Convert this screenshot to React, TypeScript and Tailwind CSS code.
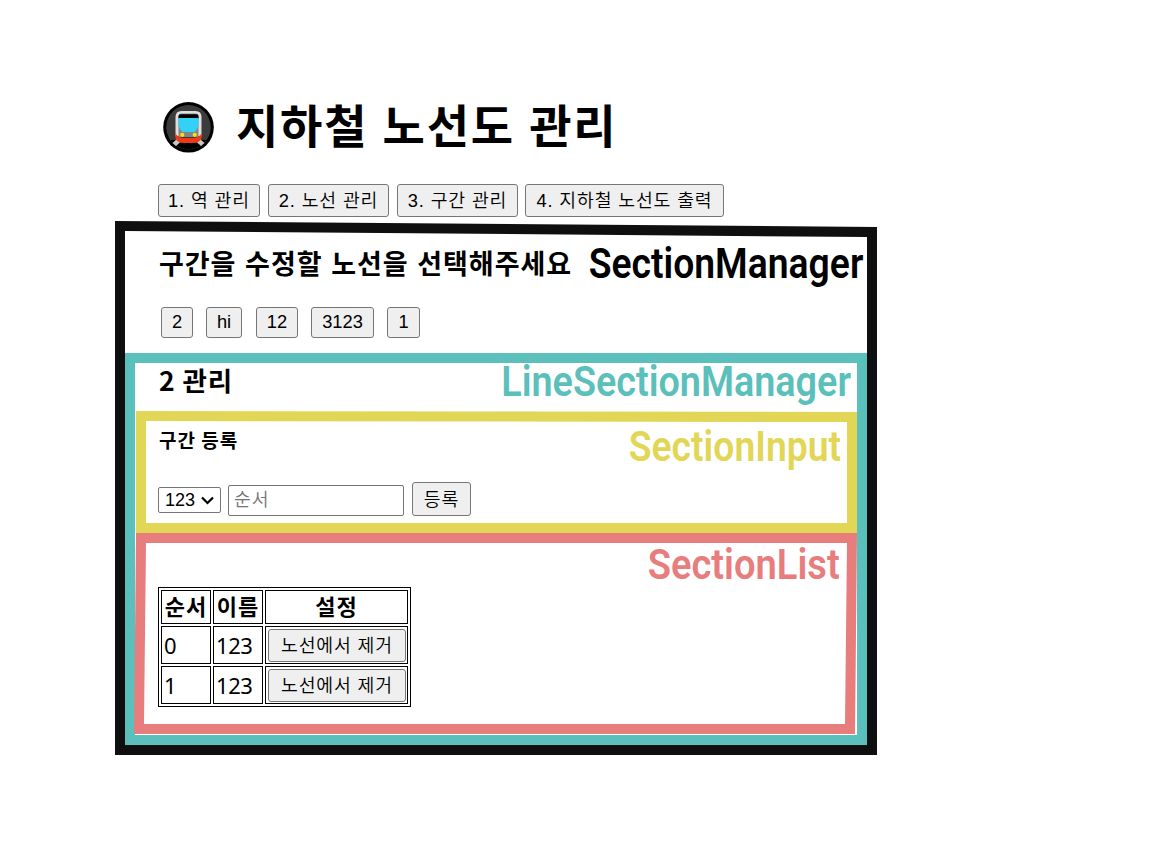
import type { ReactNode } from 'react';

const KR = "font-['Noto_Sans_CJK_KR',sans-serif]";

function TrainIcon() {
  return (
    <svg className="mt-px h-[51px] w-[51px] shrink-0" viewBox="0 0 51 51" aria-hidden="true">
      <circle cx="25.500" cy="25.300" r="25.300" fill="#000" />
      <circle cx="25.500" cy="25.300" r="22.200" fill="#3b3b3b" />
      <path d="M7.500 38h36a22.200 22.200 0 0 1-36 0Z" fill="#000" />
      <path d="m14.500 36.500-5 4.500 3.500 3 5.500-5ZM36.500 36.500l5 4.500-3.500 3-5.500-5Z" fill="#c8c8c8" />
      <path d="M12.500 34V15q0-6 6-6h14q6 0 6 6v19Z" fill="#dedede" />
      <path d="M15.500 32V14.500q0-3 3-3h14q3 0 3 3V35h-20Z" fill="#858585" />
      <path d="M15.500 16.500h20v-2.300q0-2-2-2h-16q-2 0-2 2Z" fill="#000" />
      <path d="M15.500 16h20v4q0 7-4 10h-12q-4-3-4-10Z" fill="#32d2f8" />
      <path d="M12.300 31.500q2.200 3.500 6.700 4.500h13q4.500-1 6.700-4.500V35q-1 6-9.200 6h-8q-8.200 0-9.200-6Z" fill="#f03a17" />
      <circle cx="19.300" cy="32.800" r="2.100" fill="#ffe000" />
      <circle cx="31.700" cy="32.800" r="2.100" fill="#ffe000" />
    </svg>
  );
}

function Button({ children, className }: { children: ReactNode; className: string }) {
  return (
    <button
      type="button"
      className={`flex shrink-0 items-center justify-center whitespace-nowrap rounded-[3px] border border-[#767676] bg-[#efefef] text-[18.3px] leading-none text-black ${className}`}
    >
      {children}
    </button>
  );
}

const krButton =
  "h-[33px] pt-[2px] font-['Liberation_Sans','Noto_Sans_CJK_KR',sans-serif] font-[350] tracking-[0.85px]";

function Label({ children, className }: { children: string; className: string }) {
  return (
    <span
      className={`block shrink-0 origin-right whitespace-nowrap font-[Roboto] text-[42px] font-semibold leading-[38px] ${className}`}
    >
      {children}
    </span>
  );
}

const lines = [
  { name: '2', box: 'w-8' },
  { name: 'hi', box: 'ml-[13px] w-9' },
  { name: '12', box: 'ml-[14px] w-[42px]' },
  { name: '3123', box: 'ml-[13px] w-[63px]' },
  { name: '1', box: 'ml-[13px] w-[33px]' },
];

function SectionInput() {
  return (
    <section className="ml-px h-[122px] w-[721px] bg-[#e1d655] p-[10px] [clip-path:polygon(0_0,100%_1px,100%_100%,0_100%)]">
      <div className="h-[102px] w-[701px] bg-white pl-3 [clip-path:polygon(0_0,100%_1px,100%_100%,0_100%)]">
        <div className="flex h-[60px] justify-between pr-[6px] pt-[7px]">
          <h4 className={`${KR} -mt-px pl-px text-[19px] font-bold leading-[26px] tracking-[1px]`}>구간 등록</h4>
          <Label className="scale-x-[0.888] text-[#e1d655]">SectionInput</Label>
        </div>
        <form className="flex items-start">
          <div className="relative mt-[6px]">
            <select
              defaultValue="123"
              className="block h-[26px] w-[63px] appearance-none rounded-[2px] border border-[#767676] bg-white pl-[6px] font-['Liberation_Sans'] text-[18px] leading-none text-black"
            >
              <option value="123">123</option>
            </select>
            <svg className="pointer-events-none absolute right-[6px] top-[9px] h-[9px] w-[14px]" viewBox="0 0 14 9" fill="none" stroke="#000" strokeWidth="2.200">
              <path d="m1 1.500 5.500 5.500L12 1.500" />
            </svg>
          </div>
          <input
            placeholder="순서"
            className={`${KR} ml-[7px] mt-1 h-[31px] w-[176px] rounded-[2px] border border-[#767676] pb-[5px] pl-[5px] text-[18.3px] font-[350] tracking-[1px] placeholder:text-[#757575]`}
          />
          <Button className={`${krButton} ml-2 mt-px h-[34px] w-[59px]`}>등록</Button>
        </form>
      </div>
    </section>
  );
}

function SectionList() {
  const head = `${KR} border border-black p-0 pb-[4px] text-[22px] font-bold leading-none tracking-[1px]`;
  const cell = "border border-black p-0 pl-[2px] font-['Noto_Sans'] text-[22px] leading-none tracking-[-0.4px]";
  return (
    <section className="-ml-px h-[201px] w-[723px] bg-[#e87d7d] px-3 py-[10px] [clip-path:polygon(2px_0,100%_0,calc(100%-2px)_100%,0_100%)]">
      <div className="-ml-[2px] h-[181px] w-[703px] bg-white pl-[14px] [clip-path:polygon(2px_0,100%_0,calc(100%-2px)_100%,0_100%)]">
        <div className="flex h-[44px] justify-end pr-[7px] pt-[3px]">
          <Label className="scale-x-[0.907] text-[#e87d7d]">SectionList</Label>
        </div>
        <table className="h-[120px] w-[253px] table-fixed border-separate border-spacing-[2px] border border-black">
          <colgroup>
            <col className="w-[50px]" />
            <col className="w-[50px]" />
            <col className="w-[143px]" />
          </colgroup>
          <thead>
            <tr className="h-[34px]">
              <th className={head}>순서</th>
              <th className={head}>이름</th>
              <th className={head}>설정</th>
            </tr>
          </thead>
          <tbody>
            {['0', '1'].map((order) => (
              <tr key={order} className="h-[38px]">
                <td className={cell}>{order}</td>
                <td className={cell}>123</td>
                <td className="border border-black p-0 pl-[2px]">
                  <Button className={`${krButton} w-[138px]`}>노선에서 제거</Button>
                </td>
              </tr>
            ))}
          </tbody>
        </table>
      </div>
    </section>
  );
}

function LineSectionManager() {
  return (
    <section className="h-[392px] w-[742px] bg-[#5bbfbb] p-[10px]">
      <div className="h-[372px] w-[722px] bg-white">
        <div className="flex h-[48px] justify-between pl-6 pr-[6px]">
          <h3 className={`${KR} text-[26.5px] font-bold leading-[34px] tracking-[0.9px]`}>2 관리</h3>
          <Label className="scale-x-[0.899] text-[#5bbfbb]">LineSectionManager</Label>
        </div>
        <SectionInput />
        <SectionList />
      </div>
    </section>
  );
}

function SectionManager() {
  return (
    <section className="h-[534px] w-[762px] bg-[#0f0f0f] p-[10px] [clip-path:polygon(0_0,100%_6px,100%_100%,0_100%)]">
      <div className="h-[514px] w-[742px] bg-white [clip-path:polygon(0_0,100%_6px,100%_100%,0_100%)]">
        <div className="flex h-[76px] justify-between pl-[34px] pr-1 pt-[14px]">
          <h2 className={`${KR} w-[380px] whitespace-nowrap text-[27px] font-bold leading-[35px] tracking-[0.96px] [word-spacing:1.6px]`}>
            구간을 수정할 노선을 선택해주세요
          </h2>
          <Label className="scale-x-[0.888] text-black">SectionManager</Label>
        </div>
        <div className="flex h-[46px] items-start pl-9">
          {lines.map((line) => (
            <Button key={line.name} className={`${line.box} h-[31px] font-['Liberation_Sans']`}>
              {line.name}
            </Button>
          ))}
        </div>
        <LineSectionManager />
      </div>
    </section>
  );
}

export default function App() {
  return (
    <main className="h-[848px] w-[1168px] overflow-hidden bg-white pl-[115px] pt-[101px] text-black">
      <header className="h-[120px] pl-[43px]">
        <div className="flex h-[83px] items-start pl-[5px]">
          <TrainIcon />
          <h1 className={`${KR} -mt-1 ml-[22px] text-[46px] font-bold leading-[52px] tracking-[1.8px] [word-spacing:2px]`}>
            지하철 노선도 관리
          </h1>
        </div>
        <nav className="flex">
          <Button className={`${krButton} w-[102px]`}>1. 역 관리</Button>
          <Button className={`${krButton} ml-2 w-[121px]`}>2. 노선 관리</Button>
          <Button className={`${krButton} ml-2 w-[121px]`}>3. 구간 관리</Button>
          <Button className={`${krButton} ml-[7px] w-[199px]`}>4. 지하철 노선도 출력</Button>
        </nav>
      </header>
      <SectionManager />
    </main>
  );
}
